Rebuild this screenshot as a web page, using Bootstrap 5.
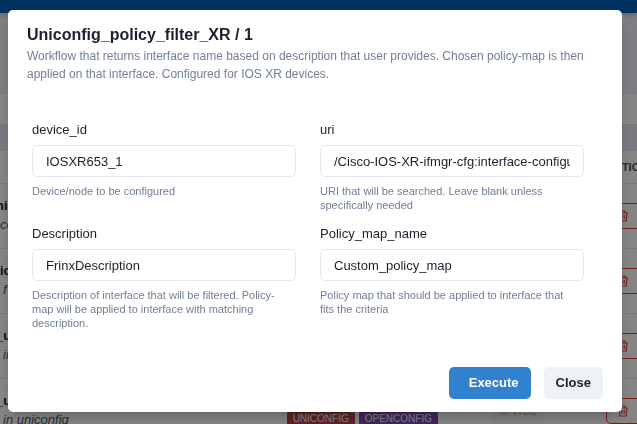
<!DOCTYPE html>
<html lang="en">
<head>
<meta charset="utf-8">
<meta name="viewport" content="width=device-width, initial-scale=1">
<title>Uniconfig_policy_filter_XR / 1</title>
<link href="https://cdn.jsdelivr.net/npm/bootstrap@5.3.0/dist/css/bootstrap.min.css" rel="stylesheet">
<style>
  body { font-family: "Liberation Sans", Arial, sans-serif; font-size: 13px; line-height: 20px; color: #1a202c; background: #fff; }
  .app-page { height: 100vh; }
  .app-bar { height: 13px; background: #0060bc; box-shadow: 0 2px 4px rgba(0,0,0,.2); position: relative; }
  .app-hero { height: 81px; background: #eff1f7; border-bottom: 1px solid #dde1ea; }
  .app-tabs { height: 31px; border-bottom: 1px solid #dbe4f0; }
  .app-band { height: 26px; background: #e6eaf4; }
  .flow-table { table-layout: fixed; width: 100%; }
  .flow-table th, .flow-table td { padding: 0; border-bottom: 1px solid #e2e8f0; }
  .flow-table thead th { height: 32px; font-size: 11px; color: #4a5568; }
  .flow-table tbody td { height: 65px; overflow: hidden; white-space: nowrap; }
  .flow-table b { display: block; line-height: 18px; }
  .clipped-name { text-indent: -4px; }
  .col-name { width: 45%; }
  .col-tree { width: 18%; }
  .col-act { width: 31px; }
  .flow-note { font-style: italic; color: #4a5568; padding-left: 3px; }
  .flow-tag { font-size: 10px; line-height: 17px; padding: 0 6px; border-radius: 4px; color: #fff; }
  .tag-red { background: #b5404a; }
  .tag-purple { background: #8048b0; }
  .tree-tag { font-size: 13px; padding: 4px 9px; border-radius: 4px; background: #f4f6fa; color: #a3a8b2; }
  .trash-btn { height: 26px; width: 60px; border: 1px solid #e53e3e; border-radius: 5px; background: none; color: #e53e3e; padding: 0 0 0 10px; }
  .run-backdrop { --bs-backdrop-opacity: .48; opacity: .48; }
  .run-dialog { max-width: none; margin: 10px 15px 0 8px; }
  .run-box { border: 0; border-radius: 5px; box-shadow: 0 8px 12px -3px rgba(0,0,0,.25); }
  .run-head { padding: 13px 19px 0; }
  .run-title { font-size: 16px; line-height: 24px; font-weight: 700; }
  .run-sub { font-size: 12px; line-height: 18px; color: #718096; margin: 0; }
  .run-form { padding: 37px 38px 0 24px; --bs-gutter-x: 24px; }
  .run-fields { --bs-gutter-x: 24px; --bs-gutter-y: 12px; }
  .run-fields label { display: block; margin-bottom: 5px; }
  .run-input { height: 32px; font-size: 13px; padding: 0 13px; border: 1px solid #e2e8f0; border-radius: 5px; color: #1a202c; }
  .run-help { font-size: 11px; line-height: 14px; color: #718096; margin-top: 7px; padding-right: 8px; }
  .run-foot { padding: 37px 19px 13px; gap: 13px; }
  .run-btn { height: 32px; font-size: 13px; font-weight: 700; border: 0; border-radius: 5px; padding: 0 12px; }
  .run-go { background: #3182ce; color: #fff; padding-left: 20px; }
  .run-close { background: #edf2f7; color: #1a202c; }
</style>
<script src="https://cdn.jsdelivr.net/npm/bootstrap@5.3.0/dist/js/bootstrap.bundle.min.js"></script>
</head>
<body class="overflow-hidden">
<svg class="d-none">
  <symbol id="trash" viewBox="0 0 12 12"><path d="M1 3h10M4 3V1h4v2M2.200 3l.6 8h6.400l.6-8M4.800 5v4M7.200 5v4" fill="none" stroke="currentColor" stroke-width="1.200"/></symbol>
</svg>
<div class="app-page overflow-hidden" aria-hidden="true">
  <div class="app-bar"></div>
  <div class="app-hero"></div>
  <div class="app-tabs"></div>
  <div class="app-band"></div>
  <table class="flow-table">
    <colgroup><col class="col-name"><col><col class="col-tree"><col class="col-act"></colgroup>
    <thead><tr><th></th><th></th><th></th><th class="text-center">ACTIONS</th></tr></thead>
    <tbody>
      <tr><td><b class="clipped-name">nic</b><div class="flow-note ps-0">co</div></td><td></td><td></td>
        <td><button class="trash-btn text-start" aria-label="Delete"><svg width="12" height="12"><use href="#trash"/></svg></button></td></tr>
      <tr><td><b>ic</b><div class="flow-note">f</div></td><td></td><td></td>
        <td><button class="trash-btn text-start" aria-label="Delete"><svg width="12" height="12"><use href="#trash"/></svg></button></td></tr>
      <tr><td><b class="clipped-name">_u</b><div class="flow-note">in</div></td><td></td><td></td>
        <td><button class="trash-btn text-start" aria-label="Delete"><svg width="12" height="12"><use href="#trash"/></svg></button></td></tr>
      <tr><td><b class="clipped-name">_u</b><div class="flow-note">in uniconfig</div></td>
        <td class="align-bottom"><div class="d-flex gap-1 pb-3"><span class="flow-tag tag-red">UNICONFIG</span><span class="flow-tag tag-purple">OPENCONFIG</span></div></td>
        <td><span class="tree-tag">0 Tree</span></td>
        <td><button class="trash-btn text-start" aria-label="Delete"><svg width="12" height="12"><use href="#trash"/></svg></button></td></tr>
    </tbody>
  </table>
</div>

<div class="modal-backdrop run-backdrop"></div>
<div class="modal d-block overflow-hidden" role="dialog" aria-modal="true" aria-labelledby="runTitle">
  <div class="modal-dialog run-dialog">
    <div class="modal-content run-box">
      <header class="run-head">
        <h1 class="run-title mb-0" id="runTitle">Uniconfig_policy_filter_XR / 1</h1>
        <p class="run-sub">Workflow that returns interface name based on description that user provides. Chosen policy-map is then applied on that interface. Configured for IOS XR devices.</p>
      </header>
      <form class="run-form">
        <div class="row run-fields">
          <div class="col-6">
            <label for="device">device_id</label>
            <input class="form-control run-input" id="device" type="text" value="IOSXR653_1" aria-describedby="deviceHelp">
            <div class="run-help" id="deviceHelp">Device/node to be configured</div>
          </div>
          <div class="col-6">
            <label for="uri">uri</label>
            <input class="form-control run-input" id="uri" type="text" value="/Cisco-IOS-XR-ifmgr-cfg:interface-configurations" aria-describedby="uriHelp">
            <div class="run-help" id="uriHelp">URI that will be searched. Leave blank unless specifically needed</div>
          </div>
          <div class="col-6">
            <label for="desc">Description</label>
            <input class="form-control run-input" id="desc" type="text" value="FrinxDescription" aria-describedby="descHelp">
            <div class="run-help" id="descHelp">Description of interface that will be filtered. Policy-map will be applied to interface with matching description.</div>
          </div>
          <div class="col-6">
            <label for="pmap">Policy_map_name</label>
            <input class="form-control run-input" id="pmap" type="text" value="Custom_policy_map" aria-describedby="pmapHelp">
            <div class="run-help" id="pmapHelp">Policy map that should be applied to interface that fits the criteria</div>
          </div>
        </div>
      </form>
      <footer class="run-foot d-flex justify-content-end">
        <button type="button" class="btn run-btn run-go">Execute</button>
        <button type="button" class="btn run-btn run-close">Close</button>
      </footer>
    </div>
  </div>
</div>
</body>
</html>
